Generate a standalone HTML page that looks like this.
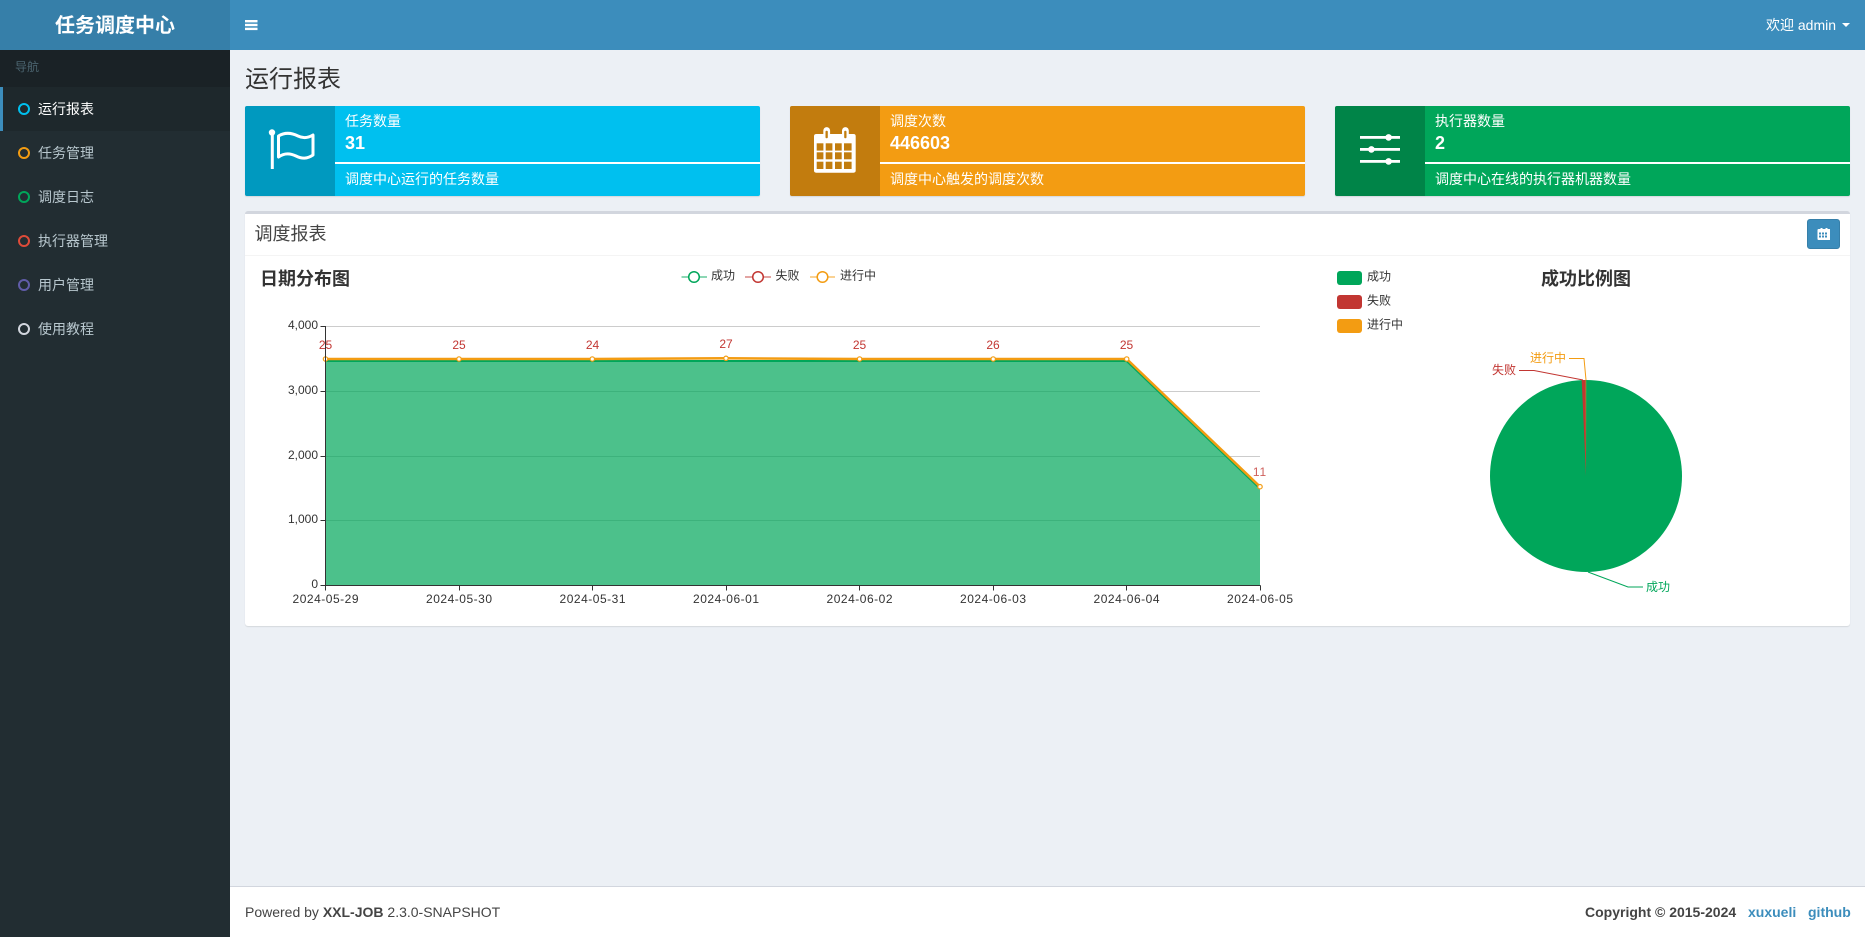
<!DOCTYPE html>
<html lang="zh"><head><meta charset="utf-8"><title>任务调度中心</title>
<style>
*{box-sizing:border-box}
html,body{margin:0;padding:0;width:1865px;height:937px;overflow:hidden;background:#ecf0f5;font-family:"Liberation Sans","Noto Sans CJK SC",sans-serif;font-size:14px;color:#333}
.a{position:absolute;white-space:nowrap}
.logo{left:0;top:0;width:230px;height:50px;background:#367fa9;color:#fff;font-size:20px;font-weight:700;text-align:center;line-height:52px}
.nav{left:230px;top:0;width:1635px;height:50px;background:#3c8dbc}
.side{left:0;top:50px;width:230px;height:887px;background:#222d32}
.navh{left:0;top:50px;width:230px;height:37px;background:#1a2226;color:#4b646f;font-size:12px;line-height:34px;padding-left:15px}
.it{left:0;width:230px;height:44px;line-height:44px;padding-left:38px;color:#b8c7ce}
.it i{position:absolute;left:18px;top:16px;width:12px;height:12px;border-radius:50%;border:2.4px solid}
.it.on{background:#1e282c;color:#fff;border-left:3px solid #3c8dbc;padding-left:35px}
.it.on i{left:15px}
.ib{top:106px;width:515px;height:90px;border-radius:2px;box-shadow:0 1px 1px rgba(0,0,0,.1);color:#fff;overflow:hidden}
.ib .ic{position:absolute;left:0;top:0;width:90px;height:90px;background:rgba(0,0,0,.2)}
.ib .t1{position:absolute;left:100px;top:5px;line-height:20px}
.ib .t2{position:absolute;left:100px;top:26px;line-height:22px;font-size:18px;font-weight:700}
.ib .ln{position:absolute;left:90px;right:0;top:56px;height:2px;background:#fff}
.ib .t3{position:absolute;left:100px;top:63px;line-height:20px}
.box{left:245px;top:211px;width:1605px;height:415px;background:#fff;border-top:3px solid #d2d6de;border-radius:3px;box-shadow:0 1px 1px rgba(0,0,0,.1)}
.hline{left:245px;top:255px;width:1605px;height:1px;background:#f4f4f4}
.foot{left:230px;top:886px;width:1635px;height:51px;background:#fff;border-top:1px solid #d2d6de}
svg text{font-family:"Liberation Sans","Noto Sans CJK SC",sans-serif;font-kerning:none}
</style></head><body>
<div class="a side"></div>
<div class="a logo">任务调度中心</div>
<div class="a nav"></div>
<svg class="a" style="left:245px;top:19px" width="13" height="12"><rect y="1" width="12.500" height="2.400" fill="#fff"/><rect y="4.800" width="12.500" height="2.400" fill="#fff"/><rect y="8.700" width="12.500" height="2.400" fill="#fff"/></svg>
<div class="a" style="left:1766px;top:15px;line-height:20px;color:#fff">欢迎 admin</div>
<svg class="a" style="left:1842px;top:23px" width="8" height="4"><path d="M0 0H8L4 4Z" fill="#fff"/></svg>

<div class="a navh">导航</div>
<div class="a it on" style="top:87px"><i style="border-color:#00c0ef"></i>运行报表</div>
<div class="a it" style="top:131px"><i style="border-color:#f39c12"></i>任务管理</div>
<div class="a it" style="top:175px"><i style="border-color:#00a65a"></i>调度日志</div>
<div class="a it" style="top:219px"><i style="border-color:#dd4b39"></i>执行器管理</div>
<div class="a it" style="top:263px"><i style="border-color:#605ca8"></i>用户管理</div>
<div class="a it" style="top:307px"><i style="border-color:#d2d6de"></i>使用教程</div>

<div class="a" style="left:245px;top:63px;font-size:24px;line-height:34px">运行报表</div>

<div class="a ib" style="left:245px;background:#00c0ef">
 <div class="ic"><svg width="90" height="90" fill="none" stroke="#fff"><circle cx="27" cy="26.500" r="3.200" fill="#fff" stroke="none"/><path d="M27.300 28V63" stroke-width="3"/><path d="M33.500 30C40 26 47 27 53 30C58 32.500 63 32 68 29V49C62 53 57 53 51 50C45 47 39 47 33.500 51Z" stroke-width="3" stroke-linejoin="round"/></svg></div>
 <div class="t1">任务数量</div><div class="t2">31</div><div class="ln"></div><div class="t3">调度中心运行的任务数量</div>
</div>
<div class="a ib" style="left:790px;background:#f39c12">
 <div class="ic"><svg width="90" height="90"><path d="M26.500 28H33.300V24.500a3.400 3.400 0 0 1 6.800 0V28H52V24.500a3.400 3.400 0 0 1 6.800 0V28H63.500q2.200 0 2.200 2.200V64.500q0 2.200-2.200 2.200H26.200q-2.200 0-2.200-2.200V30.200q0-2.200 2.500-2.200Z" fill="#fff"/><g fill="#c27d0e"><rect x="35.500" y="24.700" width="2.300" height="7.600" rx="1"/><rect x="54.200" y="24.700" width="2.300" height="7.600" rx="1"/>
 <rect x="26.700" y="37.300" width="6.700" height="7.300"/><rect x="35.700" y="37.300" width="6.700" height="7.300"/><rect x="45" y="37.300" width="6.700" height="7.300"/><rect x="54" y="37.300" width="7.600" height="7.300"/>
 <rect x="26.700" y="46.300" width="6.700" height="7"/><rect x="35.700" y="46.300" width="6.700" height="7"/><rect x="45" y="46.300" width="6.700" height="7"/><rect x="54" y="46.300" width="7.600" height="7"/>
 <rect x="26.700" y="55.700" width="6.700" height="7.300"/><rect x="35.700" y="55.700" width="6.700" height="7.300"/><rect x="45" y="55.700" width="6.700" height="7.300"/><rect x="54" y="55.700" width="7.600" height="7.300"/></g></svg></div>
 <div class="t1">调度次数</div><div class="t2">446603</div><div class="ln"></div><div class="t3">调度中心触发的调度次数</div>
</div>
<div class="a ib" style="left:1335px;background:#00a65a">
 <div class="ic"><svg width="90" height="90" fill="#fff"><rect x="25" y="30" width="40" height="2.800"/><circle cx="53.600" cy="31.400" r="3.300"/><rect x="25" y="42" width="40" height="2.800"/><circle cx="36.400" cy="43.400" r="3.300"/><rect x="25" y="54" width="40" height="2.800"/><circle cx="53.600" cy="55.400" r="3.300"/></svg></div>
 <div class="t1">执行器数量</div><div class="t2">2</div><div class="ln"></div><div class="t3">调度中心在线的执行器机器数量</div>
</div>

<div class="a box"></div>
<div class="a hline"></div>
<div class="a" style="left:254.500px;top:221px;font-size:18px;line-height:26px;color:#444">调度报表</div>
<div class="a" style="left:1807px;top:219px;width:33px;height:30px;background:#3c8dbc;border:1px solid #367fa9;border-radius:3px"></div>
<svg class="a" style="left:1817px;top:227px" width="13" height="14"><path d="M1 2h2V1h2v1h3V1h2v1h2q1 0 1 1v9q0 1-1 1H1q-1 0-1-1V3q0-1 1-1Z" fill="#fff" transform="translate(.5 0)"/><g fill="#3c8dbc"><rect x="2" y="5.500" width="2" height="2"/><rect x="5" y="5.500" width="2" height="2"/><rect x="8" y="5.500" width="2" height="2"/><rect x="2" y="8.500" width="2" height="2"/><rect x="5" y="8.500" width="2" height="2"/><rect x="8" y="8.500" width="2" height="2"/></g></svg>

<svg class="a" style="left:0;top:0" width="1865" height="937" font-size="12">
 <text x="260" y="285" font-size="18" font-weight="700" fill="#333">日期分布图</text>
 <text x="1586" y="285" font-size="18" font-weight="700" fill="#333" text-anchor="middle">成功比例图</text>

 <g fill="none" stroke-width="1.500">
  <path d="M681.500 277H707" stroke="#00a65a" opacity=".6"/><circle cx="694" cy="277" r="5.300" fill="#fff" stroke="#00a65a"/>
  <path d="M745 277H771" stroke="#c23632" opacity=".6"/><circle cx="758" cy="277" r="5.300" fill="#fff" stroke="#c23632"/>
  <path d="M810 277H835" stroke="#f39c12" opacity=".6"/><circle cx="822.500" cy="277" r="5.300" fill="#fff" stroke="#f39c12"/>
 </g>
 <g fill="#333"><text x="711" y="279.500">成功</text><text x="775.500" y="279.500">失败</text><text x="840" y="279.500">进行中</text></g>

 <g stroke="#ccc"><path d="M325.500 326.500H1260M325.500 391.500H1260M325.500 456.500H1260M325.500 520.500H1260"/></g>
 <path d="M325.500 361H1126.700L1260 488.500V585.500H325.500Z" fill="#00a65a" fill-opacity=".7"/>
 <path d="M325.500 361H1126.700L1260 488.500" fill="none" stroke="#00a65a" stroke-width="2"/>
 <path d="M325.500 359H592.300L726 358.300L859.600 359H1126.700L1260 486.700" fill="none" stroke="#f39c12" stroke-width="2.500"/>
 <g fill="#fff" stroke="#f39c12" stroke-width="1.200">
  <circle cx="325.500" cy="359" r="2.200"/><circle cx="459" cy="359" r="2.200"/><circle cx="592.300" cy="359" r="2.200"/><circle cx="726" cy="358.300" r="2.200"/><circle cx="859.600" cy="359" r="2.200"/><circle cx="993.200" cy="359" r="2.200"/><circle cx="1126.700" cy="359" r="2.200"/><circle cx="1260" cy="486.700" r="2.200"/>
 </g>
 <g stroke="#333" fill="none"><path d="M325.500 326V585.500H1260.500"/>
  <path d="M320.500 326.500H325.500M320.500 391.500H325.500M320.500 456.500H325.500M320.500 520.500H325.500M320.500 585.500H325.500"/>
  <path d="M325.500 585.500v5M459.500 585.500v5M592.500 585.500v5M726.500 585.500v5M859.500 585.500v5M993.500 585.500v5M1126.500 585.500v5M1260.500 585.500v5"/></g>
 <g fill="#333" text-anchor="end"><text x="318" y="329">4,000</text><text x="318" y="394">3,000</text><text x="318" y="459">2,000</text><text x="318" y="523">1,000</text><text x="318" y="588">0</text></g>
 <g fill="#333" text-anchor="middle"><text x="325.500" y="603" textLength="66">2024-05-29</text><text x="459" y="603" textLength="66">2024-05-30</text><text x="592.500" y="603" textLength="66">2024-05-31</text><text x="726" y="603" textLength="66">2024-06-01</text><text x="859.500" y="603" textLength="66">2024-06-02</text><text x="993" y="603" textLength="66">2024-06-03</text><text x="1126.500" y="603" textLength="66">2024-06-04</text><text x="1260" y="603" textLength="66">2024-06-05</text></g>
 <g fill="#c23632" text-anchor="middle"><text x="325.500" y="349">25</text><text x="459" y="349">25</text><text x="592.500" y="349">24</text><text x="726" y="348">27</text><text x="859.500" y="349">25</text><text x="993" y="349">26</text><text x="1126.500" y="349">25</text><text x="1259.500" y="476" opacity=".8">11</text></g>

 <rect x="1337" y="271" width="25" height="14" rx="3" fill="#00a65a"/><rect x="1337" y="295" width="25" height="14" rx="3" fill="#c23632"/><rect x="1337" y="319" width="25" height="14" rx="3" fill="#f39c12"/>
 <g fill="#333"><text x="1367" y="280.500">成功</text><text x="1367" y="304.500">失败</text><text x="1367" y="328.500">进行中</text></g>

 <circle cx="1586" cy="476" r="96" fill="#00a65a"/>
 <path d="M1586 476L1581.700 380.100A96 96 0 0 1 1585.700 380Z" fill="#c23632"/>
 <path d="M1586 476L1585.700 380H1586.200Z" fill="#f39c12"/>
 <g fill="none" stroke-width="1">
  <path d="M1569 358.500H1584L1586 380" stroke="#f39c12"/>
  <path d="M1519 370.500H1534L1583 380" stroke="#c23632"/>
  <path d="M1588 572L1628 587H1643" stroke="#00a65a"/>
 </g>
 <text x="1530" y="362" fill="#f39c12">进行中</text>
 <text x="1492" y="374" fill="#c23632">失败</text>
 <text x="1646" y="591" fill="#00a65a">成功</text>
</svg>

<div class="a foot"></div>
<div class="a" style="left:245px;top:902px;line-height:20px;color:#444">Powered by <b>XXL-JOB</b> 2.3.0-SNAPSHOT</div>
<div class="a" style="left:1585px;top:902px;line-height:20px;color:#444;font-weight:700">Copyright © 2015-2024</div>
<div class="a" style="left:1748px;top:902px;line-height:20px;color:#3c8dbc;font-weight:700">xuxueli</div>
<div class="a" style="left:1808px;top:902px;line-height:20px;color:#3c8dbc;font-weight:700">github</div>
</body></html>
